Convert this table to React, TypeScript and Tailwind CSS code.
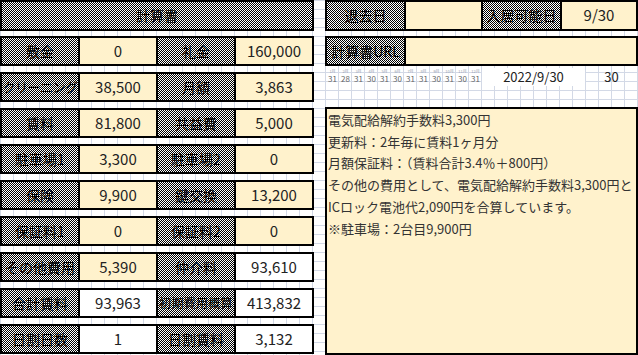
import React from 'react';

type Row = {
  l1: string;
  v1: string;
  l2: string;
  v2: string;
  y1: boolean;
  y2: boolean;
};

const rows: Row[] = [
  { l1: '敷金', v1: '0', l2: '礼金', v2: '160,000', y1: true, y2: true },
  { l1: 'クリーニング', v1: '38,500', l2: '月額', v2: '3,863', y1: true, y2: true },
  { l1: '賃料', v1: '81,800', l2: '共益費', v2: '5,000', y1: true, y2: true },
  { l1: '駐車場1', v1: '3,300', l2: '駐車場2', v2: '0', y1: true, y2: true },
  { l1: '保険', v1: '9,900', l2: '鍵交換', v2: '13,200', y1: true, y2: true },
  { l1: '保証料1', v1: '0', l2: '保証料2', v2: '0', y1: true, y2: true },
  { l1: 'その他費用', v1: '5,390', l2: '仲介料', v2: '93,610', y1: true, y2: false },
  { l1: '合計賃料', v1: '93,963', l2: '初期費用概算', v2: '413,832', y1: false, y2: false },
  { l1: '日割日数', v1: '1', l2: '日割賃料', v2: '3,132', y1: false, y2: false },
];

const months = [
  ['1月', '31'],
  ['2月', '28'],
  ['3月', '31'],
  ['4月', '30'],
  ['5月', '31'],
  ['6月', '30'],
  ['7月', '31'],
  ['8月', '31'],
  ['9月', '30'],
  ['10月', '31'],
  ['11月', '30'],
  ['12月', '31'],
];

const notes = [
  '電気配給解約手数料3,300円',
  '更新料：2年毎に賃料1ヶ月分',
  '月額保証料：（賃料合計3.4％＋800円）',
  'その他の費用として、電気配給解約手数料3,300円と',
  'ICロック電池代2,090円を合算しています。',
  '※駐車場：2台目9,900円',
];

// long labels are squeezed a bit like the sheet does
const labelSize = (text: string) => {
  if (text === '初期費用概算') return 'text-[12px] tracking-[0.3px]';
  if (text === 'クリーニング') return 'text-[13px] tracking-[-0.5px]';
  return 'text-[14px]';
};

const Label: React.FC<{ text: string; w: string }> = ({ text, w }) => (
  <div
    className={`${w} ${labelSize(text)} flex items-center justify-center overflow-hidden whitespace-nowrap bg-[repeating-conic-gradient(#000_0_25%,#fff_0_50%)] bg-[length:2px_2px] text-black`}
  >
    {text}
  </div>
);

const Value: React.FC<{ text: string; yellow: boolean }> = ({ text, yellow }) => (
  <div
    className={`w-[76px] flex items-center justify-center text-[15px] text-[#222] ${
      yellow ? 'bg-[#fff2cc]' : 'bg-white'
    }`}
  >
    {text}
  </div>
);

export default function App() {
  return (
    <div className="w-[638px] h-[355px] overflow-hidden flex gap-[11px] bg-white bg-[linear-gradient(to_right,#d3d9e6_1px,transparent_1px),linear-gradient(#d3d9e6_1px,transparent_1px)] bg-[length:13px_9px] font-['Noto_Sans_CJK_JP','Noto_Sans',sans-serif]">
      {/* left: calculation sheet */}
      <div className="w-[314px] flex flex-col">
        <div className="h-[31px] bg-black p-[2px] flex">
          <Label text="計算書" w="flex-1" />
        </div>
        <div className="mt-[5px] flex flex-col gap-[6px]">
          {rows.map((r) => (
            <div key={r.l1} className="h-[30px] flex gap-[2px] bg-black p-[2px]">
              <Label text={r.l1} w="w-[76px]" />
              <Value text={r.v1} yellow={r.y1} />
              <Label text={r.l2} w="w-[76px]" />
              <Value text={r.v2} yellow={r.y2} />
            </div>
          ))}
        </div>
      </div>

      {/* right: dates and notes */}
      <div className="w-[313px] flex flex-col">
        <div className="h-[31px] flex gap-[2px] bg-black p-[2px]">
          <Label text="退去日" w="w-[77px]" />
          <div className="w-[75px] bg-[#fff2cc]" />
          <Label text="入居可能日" w="w-[77px]" />
          <div className="w-[74px] flex items-center justify-center bg-[#fff2cc] text-[15px] text-[#222]">
            9/30
          </div>
        </div>
        <div className="mt-[5px] h-[30px] flex gap-[2px] bg-black p-[2px]">
          <Label text="計算書URL" w="w-[77px]" />
          <div className="flex-1 bg-[#fff2cc]" />
        </div>
        <div className="h-[41px] flex items-start">
          <div className="ml-[1px] mt-[3px] flex">
            {months.map(([m, d]) => (
              <div key={m} className="w-[13px] flex flex-col items-center">
                <div className="h-[5px] text-[4px] leading-[5px] text-[#9aa0b0] whitespace-nowrap">{m}</div>
                <div className="h-[9px] text-[8px] leading-[9px] text-[#666]">{d}</div>
              </div>
            ))}
          </div>
          <div className="mt-[2px] w-[103px] h-[18px] bg-white flex items-center justify-center text-[13px] text-[#222]">
            2022/9/30
          </div>
          <div className="mt-[2px] flex-1 h-[18px] flex items-center justify-center text-[13px] text-[#222]">
            30
          </div>
        </div>
        <div className="h-[248px] bg-[#fff2cc] border-2 border-black px-[1px] text-[13px] leading-[21.7px] text-[#333] whitespace-nowrap">
          {notes.map((n) => (
            <div key={n}>{n}</div>
          ))}
        </div>
      </div>
    </div>
  );
}
